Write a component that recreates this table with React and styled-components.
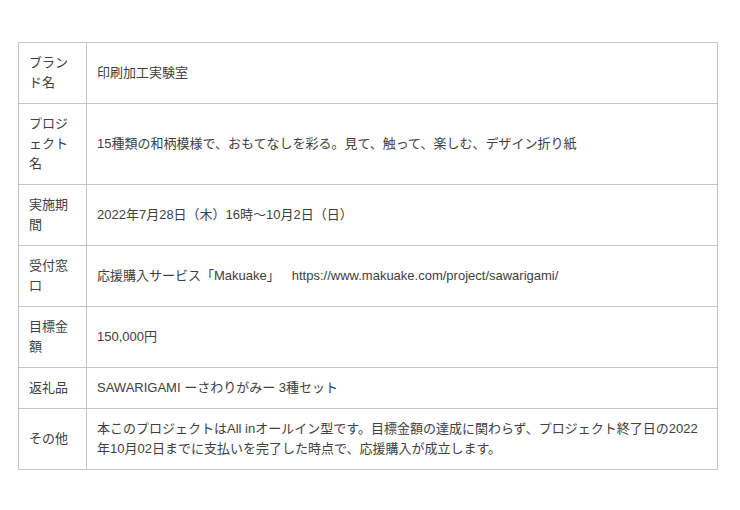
import React from "react";
import styled, { createGlobalStyle } from "styled-components";

const Global = createGlobalStyle`
  html, body { margin: 0; padding: 0; background: #fff; }
  body { font-family: "Liberation Sans", Arial, "Noto Sans CJK JP", sans-serif; }
`;

const Page = styled.div`
  padding: 42px 22px 0 18px;
`;

const Table = styled.table`
  width: 700px;
  border-collapse: collapse;
  font-size: 13px;
  line-height: 20px;
  color: #404040;
`;

const Th = styled.td`
  width: 47px;
  padding: 10px;
  border: 1px solid #c4c4c4;
  vertical-align: middle;
  text-align: left;
  font-weight: normal;
`;

const Td = styled.td`
  padding: 10px;
  border: 1px solid #c4c4c4;
  vertical-align: middle;
`;

const Gap = styled.span`
  display: inline-block;
  width: 12px;
`;

const rows = [
  ["ブランド名", "印刷加工実験室"],
  ["プロジェクト名", "15種類の和柄模様で、おもてなしを彩る。見て、触って、楽しむ、デザイン折り紙"],
  ["実施期間", "2022年7月28日（木）16時～10月2日（日）"],
  [
    "受付窓口",
    <>
      応援購入サービス「Makuake」<Gap />https://www.makuake.com/project/sawarigami/
    </>,
  ],
  ["目標金額", "150,000円"],
  ["返礼品", "SAWARIGAMI ーさわりがみー 3種セット"],
  [
    "その他",
    "本このプロジェクトはAll inオールイン型です。目標金額の達成に関わらず、プロジェクト終了日の2022年10月02日までに支払いを完了した時点で、応援購入が成立します。",
  ],
];

export default function App() {
  return (
    <>
      <Global />
      <Page>
        <Table>
          <tbody>
            {rows.map(([k, v], i) => (
              <tr key={i}>
                <Th>{k}</Th>
                <Td>{v}</Td>
              </tr>
            ))}
          </tbody>
        </Table>
      </Page>
    </>
  );
}
